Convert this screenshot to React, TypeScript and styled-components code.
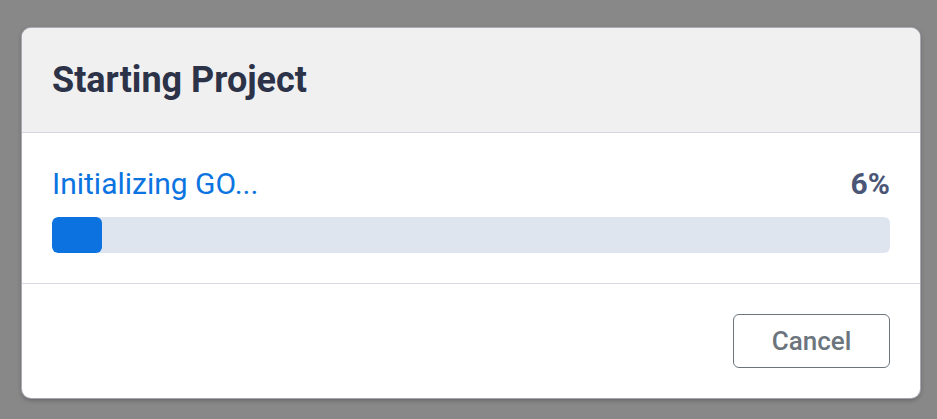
import React from 'react';
import styled, { createGlobalStyle } from 'styled-components';

const GlobalStyle = createGlobalStyle`
  html, body {
    margin: 0;
    padding: 0;
    background: #888888;
    font-family: Roboto, "Liberation Sans", sans-serif;
  }
`;

const Backdrop = styled.div`
  width: 937px;
  height: 419px;
  box-sizing: border-box;
  padding: 28px 17px 0 22px;
`;

const Dialog = styled.div`
  width: 898px;
  height: 370px;
  background: #ffffff;
  border-radius: 9px;
  overflow: hidden;
  box-shadow: 0 0 0 1px rgba(200, 203, 220, 0.6), 0 2px 5px rgba(0, 0, 0, 0.3);
  display: flex;
  flex-direction: column;
`;

const Header = styled.div`
  height: 105px;
  box-sizing: border-box;
  background: #f0f0f1;
  border-bottom: 1px solid #d6d7e3;
  padding: 0 30px;
  display: flex;
  align-items: center;
`;

const Title = styled.h2`
  margin: 0;
  font-size: 36px;
  line-height: 42px;
  font-weight: 700;
  color: #2c3348;
`;

const Body = styled.div`
  height: 151px;
  box-sizing: border-box;
  border-bottom: 1px solid #d9dae3;
  padding: 33px 30px 0;
`;

const StatusRow = styled.div`
  display: flex;
  justify-content: space-between;
  align-items: baseline;
  line-height: 36px;
  margin-bottom: 15px;
`;

const Status = styled.span`
  font-size: 30px;
  color: #0b74e0;
`;

const Percent = styled.span`
  font-size: 30px;
  font-weight: 700;
  color: #4b5677;
`;

const Track = styled.div`
  height: 36px;
  background: #dee5ee;
  border-radius: 6px;
  overflow: hidden;
`;

const Fill = styled.div<{ $value: number }>`
  height: 100%;
  width: ${(p) => p.$value}%;
  background: #0b72e0;
  border-radius: 6px;
`;

const Footer = styled.div`
  flex: 1;
  display: flex;
  justify-content: flex-end;
  align-items: flex-start;
  padding: 30px 30px 0;
`;

const CancelButton = styled.button`
  width: 157px;
  height: 54px;
  background: #ffffff;
  border: 1px solid #6c757d;
  border-radius: 6px;
  font-family: Roboto, "Liberation Sans", sans-serif;
  font-size: 26px;
  font-weight: 500;
  color: #6c757d;
  cursor: pointer;
`;

export default function App() {
  const progress = 6;
  return (
    <>
      <GlobalStyle />
      <Backdrop>
        <Dialog>
          <Header>
            <Title>Starting Project</Title>
          </Header>
          <Body>
            <StatusRow>
              <Status>Initializing GO...</Status>
              <Percent>{progress}%</Percent>
            </StatusRow>
            <Track>
              <Fill $value={progress} />
            </Track>
          </Body>
          <Footer>
            <CancelButton type="button">Cancel</CancelButton>
          </Footer>
        </Dialog>
      </Backdrop>
    </>
  );
}
